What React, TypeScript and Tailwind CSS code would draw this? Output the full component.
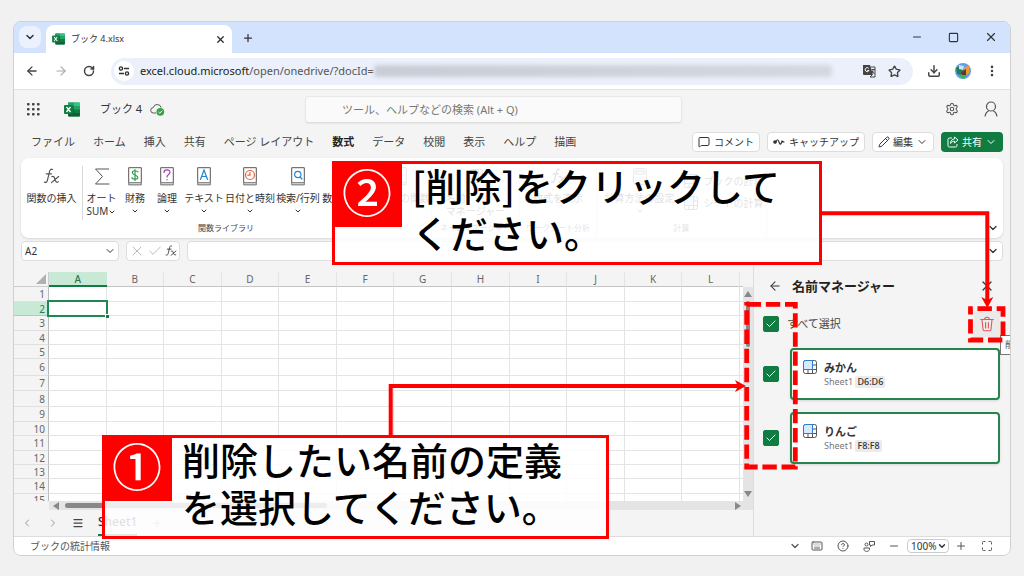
import type { ReactNode } from "react";
import {
  ArrowLeft,
  ArrowRight,
  Check,
  ChevronDown,
  ChevronLeft,
  ChevronRight,
  CircleHelp,
  Download,
  EllipsisVertical,
  Keyboard,
  Maximize,
  Menu,
  MessageSquare,
  Minus,
  Pencil,
  Plus,
  RotateCw,
  Settings,
  Square,
  Star,
  X,
} from "lucide-react";

const FONT = "font-['Noto_Sans','Noto_Sans_CJK_JP',sans-serif]";

function ExcelLogo({ className }: { className: string }) {
  return (
    <svg viewBox="0 0 32 30" className={className} aria-hidden="true">
      <rect x="8" y="1" width="24" height="28" rx="2" fill="#21a366" />
      <rect x="8" y="1" width="12" height="7" fill="#21a366" />
      <path d="M20 1h10a2 2 0 0 1 2 2v5H20z" fill="#33c481" />
      <rect x="8" y="8" width="12" height="7" fill="#107c41" />
      <rect x="20" y="8" width="12" height="7" fill="#21a366" />
      <rect x="8" y="15" width="12" height="7" fill="#185c37" />
      <rect x="20" y="15" width="12" height="7" fill="#107c41" />
      <path d="M8 22h24v5a2 2 0 0 1-2 2H10a2 2 0 0 1-2-2z" fill="#185c37" />
      <rect x="0" y="6" width="18" height="18" rx="2" fill="#107c41" />
      <path d="M5 10l8 10M13 10l-8 10" stroke="#fff" strokeWidth="2.600" fill="none" />
    </svg>
  );
}

function FxIcon({ className }: { className: string }) {
  return (
    <svg viewBox="0 0 16 16" className={className} fill="none" stroke="currentColor" strokeWidth="1.1" strokeLinecap="round" aria-hidden="true">
      <path d="M9 1.4C7.6.6 6.6 1.500 6.200 3.200L4.200 11.500C3.800 13.300 2.800 14 1.300 13.300M3 5.500h5" />
      <path d="M8.300 8.200c1.700-.9 2.300.2 2.900 2.300.6 2.200 1.400 3.600 3.200 2.500M14.700 8L8 13.800" />
    </svg>
  );
}

function BookIcon({ color, children }: { color: string; children: ReactNode }) {
  return (
    <svg viewBox="0 0 14 19" className="h-[19px] w-3.5" fill="none" aria-hidden="true">
      <path d="M.7.700h12.600v15H.700z" fill="#fff" stroke="#555" />
      <path d="M.7 15.700v2.200h12.600v-2.200" fill="#ccc" stroke="#777" />
      <g stroke={color} strokeWidth="1.200" strokeLinecap="round">
        {children}
      </g>
    </svg>
  );
}

function RangeIcon() {
  return (
    <svg viewBox="0 0 14 14" className="size-3.5 shrink-0" fill="none" aria-hidden="true">
      <rect x=".5" y=".5" width="13" height="13" rx="2" fill="#fff" stroke="#555" />
      <path d="M9.500.500v13M.5 9.500h13M9.500 5h4M5 9.500v4" stroke="#555" />
      <path d="M.5 9.500v-7a2 2 0 0 1 2-2h7v9z" fill="#d6eafb" stroke="#2b7cd3" />
    </svg>
  );
}

function Tabs() {
  return (
    <header className="flex h-[31px] items-end bg-[#d3e3fd] pr-3">
      <button aria-label="タブを検索" className="mb-[5px] ml-[5px] grid size-[22px] place-items-center rounded-lg bg-[#ebf2fe]">
        <ChevronDown className="size-3" strokeWidth={3} />
      </button>
      <div className="ml-[5px] flex h-7 w-[186px] items-center rounded-t-lg bg-white px-1.5">
        <ExcelLogo className="h-3 w-[13px]" />
        <span className="ml-1.5 text-[9px] text-[#333]">ブック 4.xlsx</span>
        <button aria-label="タブを閉じる" className="ml-auto">
          <X className="size-[11px]" strokeWidth={3} />
        </button>
      </div>
      <button aria-label="新しいタブ" className="mb-[9px] ml-2.5">
        <Plus className="size-3" strokeWidth={2.500} />
      </button>
      <div className="mb-[9px] ml-auto flex items-center gap-[25px]">
        <button aria-label="最小化"><Minus className="size-3" /></button>
        <button aria-label="最大化"><Square className="size-[11px]" strokeWidth={2.500} /></button>
        <button aria-label="閉じる"><X className="size-3.5" /></button>
      </div>
    </header>
  );
}

function AddressBar() {
  return (
    <div className="flex h-[37px] items-center border-b border-[#e2e2e2] bg-white pr-[11px] text-[#444]">
      <div className="flex w-[97px] items-center gap-[15px] pl-[11px]">
        <button aria-label="戻る"><ArrowLeft className="size-3.5" strokeWidth={2.200} /></button>
        <button aria-label="進む" className="text-[#aaa]"><ArrowRight className="size-3.5" /></button>
        <button aria-label="再読み込み"><RotateCw className="size-3" strokeWidth={3} /></button>
      </div>
      <div className="flex h-[27px] min-w-0 flex-1 items-center rounded-full bg-[#ebf0fa] pr-3 pl-[3px]">
        <span className="grid size-5 shrink-0 place-items-center rounded-full bg-white">
          <svg viewBox="0 0 12 10" className="h-2.5 w-3" fill="none" stroke="#333" strokeWidth="1.400" aria-hidden="true">
            <circle cx="3" cy="2.500" r="1.600" />
            <path d="M6 2.500h5M1 7.500h5" />
            <circle cx="9" cy="7.500" r="1.600" />
          </svg>
        </span>
        <span className="ml-1.5 shrink-0 text-[11px] text-[#555]">
          <span className="text-[#222]">excel.cloud.microsoft</span>/open/onedrive/?docId=
        </span>
        <span className="h-3 min-w-0 flex-1 rounded bg-linear-to-r from-[#c9cdd6] via-[#ced2da] to-[#d4d8e1] blur-[2px]" />
        <button aria-label="このページを翻訳" className="ml-[30px] shrink-0">
          <svg viewBox="0 0 14 14" className="size-3.5" fill="none" aria-hidden="true">
            <path d="M1 1h7l3 10H2a1 1 0 0 1-1-1z" fill="#444" />
            <path d="M6.800 4.500A2 2 0 1 0 7 6.500H5.300" stroke="#fff" />
            <path d="M8.500 3H13v10H8l2-2M9.500 5.500H13M11 5v1.500c0 1.500-.6 2.500-1.500 3M10 7l2.500 3" stroke="#444" />
          </svg>
        </button>
        <button aria-label="ブックマーク" className="ml-3 shrink-0"><Star className="size-[13px]" strokeWidth={2.500} /></button>
      </div>
      <button aria-label="ダウンロード" className="ml-3.5"><Download className="size-3.5" strokeWidth={2.500} /></button>
      <button aria-label="プロフィール" className="ml-3.5">
        <svg viewBox="0 0 16 16" className="size-4" aria-hidden="true">
          <circle cx="8" cy="8" r="8" fill="#5a9ff0" />
          <path d="M1 5l5-3 3 6-3 4-4-1z" fill="#2c7a55" />
          <path d="M4 2l5 1-1 4-4-1z" fill="#cfe4fb" />
          <path d="M9 4l5-1v7l-3 2z" fill="#f09a2a" />
          <path d="M6 10l5-4v6l-3 1z" fill="#5d3a25" />
          <path d="M4 12l7 0-1 3.500H7z" fill="#39b54a" />
        </svg>
      </button>
      <button aria-label="メニュー" className="ml-3.5"><EllipsisVertical className="size-3.5" strokeWidth={2.500} /></button>
    </div>
  );
}

function AppHeader() {
  return (
    <div className="grid h-10 grid-cols-[291px_1fr_328px] items-center pb-0.5">
      <div className="flex items-center pl-[13px]">
        <button aria-label="アプリ起動ツール">
          <svg viewBox="0 0 13 13" className="size-[13px]" fill="#444" aria-hidden="true">
            {[0, 5, 10].map((y) => [0, 5, 10].map((x) => <rect key={`${x}-${y}`} x={x} y={y} width="2.600" height="2.600" rx=".8" />))}
          </svg>
        </button>
        <ExcelLogo className="ml-6 h-[15px] w-4" />
        <span className="ml-5 text-[11px] text-[#333]">ブック 4</span>
        <svg viewBox="0 0 15 13" className="ml-2 h-[13px] w-[15px]" fill="none" aria-hidden="true">
          <path d="M6 10H3.500a2.700 2.700 0 0 1-.2-5.400 4 4 0 0 1 7.800 0" stroke="#555" />
          <circle cx="10.300" cy="8.800" r="3.900" fill="#37a546" />
          <path d="M8.500 9l1.300 1.200 2.300-2.500" stroke="#fff" />
        </svg>
      </div>
      <input
        aria-label="検索"
        placeholder="ツール、ヘルプなどの検索 (Alt + Q)"
        className="h-[27px] w-full rounded border border-[#e8e8e8] border-b-[#ddd] bg-[#fafafa] pl-9 text-[11px] shadow-xs outline-none placeholder:text-[#777]"
      />
      <div className="flex items-center justify-end gap-[25px] pr-3 text-[#555]">
        <button aria-label="設定">
          <Settings className="size-3.5" strokeWidth={1.800} />
        </button>
        <button aria-label="アカウント">
          <svg viewBox="0 0 14 16" className="h-4 w-3.5" fill="none" stroke="currentColor" strokeWidth="1.200" aria-hidden="true">
            <circle cx="7" cy="5.500" r="4.500" />
            <path d="M1 15.500C1.500 12 3 10.500 5 9.700M13 15.500c-.5-3.500-2-5-4-5.800" />
          </svg>
        </button>
      </div>
    </div>
  );
}

const RIBBON_TABS = ["ファイル", "ホーム", "挿入", "共有", "ページ レイアウト", "数式", "データ", "校閲", "表示", "ヘルプ", "描画"];
const ACTION = "flex h-5 items-center rounded border border-[#ddd] bg-white px-[5px] text-[10px] text-[#333]";

function RibbonTabs() {
  return (
    <div className="flex h-7 items-center justify-between pr-[7px] pb-1 pl-[17px] whitespace-nowrap">
      <nav className="flex gap-[18px] text-[11px] text-[#444]">
        {RIBBON_TABS.map((t) => (
          <button key={t} className={t === "数式" ? "font-bold text-[#222]" : ""}>{t}</button>
        ))}
      </nav>
      <div className="flex gap-[7px]">
        <button className={`${ACTION} gap-1`}><MessageSquare className="size-3" />コメント</button>
        <button className={`${ACTION} gap-1`}>
          <svg viewBox="0 0 12 8" className="h-2 w-3" fill="none" stroke="#333" strokeWidth="1.200" aria-hidden="true">
            <circle cx="2" cy="4" r="1.200" fill="#333" />
            <path d="M3 4c1-3 2-3 3 0s2 3 3-1l2 1M9 4h2.500" />
          </svg>
          キャッチアップ
        </button>
        <button className={`${ACTION} gap-[3px]`}><Pencil className="size-3" />編集<ChevronDown className="size-3" /></button>
        <button className="flex h-5 items-center gap-[3px] rounded bg-[#107c41] px-1.5 text-[10px] text-white">
          <svg viewBox="0 0 12 12" className="size-3" fill="none" stroke="currentColor" aria-hidden="true">
            <path d="M5 2H2.500A1.500 1.500 0 0 0 1 3.500v6A1.500 1.500 0 0 0 2.500 11h6A1.500 1.500 0 0 0 10 9.500V8" />
            <path d="M7.500 1l3.500 3-3.500 3V5.200C5.500 5.200 4.500 6 3.500 7.500 3.700 4.700 5.200 3 7.500 2.800z" />
          </svg>
          共有<ChevronDown className="size-3" />
        </button>
      </div>
    </div>
  );
}

function Tool({ label, icon, width, arrow = true }: { label: string; icon: ReactNode; width: string; arrow?: boolean }) {
  return (
    <button className={`flex shrink-0 flex-col items-center text-[10px] leading-[13px] whitespace-nowrap text-[#333] ${width}`}>
      <span className="mb-1.5 grid h-5 place-items-center">{icon}</span>
      {label}
      {arrow && <ChevronDown className="mt-0.5 size-2" strokeWidth={3} />}
    </button>
  );
}

function Ribbon() {
  return (
    <section className="mx-[7px] flex h-20 rounded-lg bg-white pt-2 pr-1 shadow">
      <div className="flex w-[411px] shrink-0 flex-col border-r border-[#e0e0e0]">
        <div className="flex h-14 overflow-hidden">
          <Tool label="関数の挿入" width="w-[61px]" arrow={false} icon={<FxIcon className="size-[17px] text-[#555]" />} />
          <span className="h-[54px] w-px shrink-0 bg-[#d8d8d8]" />
          <button className="flex w-[37px] shrink-0 flex-col items-center text-[10px] leading-[13px] whitespace-nowrap text-[#333]">
            <span className="mb-1.5 grid h-5 place-items-center">
              <svg viewBox="0 0 16 17" className="h-[17px] w-4" fill="none" stroke="#555" aria-hidden="true">
                <path d="M15 1H1.500l7 7.500-7 7.500H15.500" />
              </svg>
            </span>
            オート
            <span className="flex items-center">SUM<ChevronDown className="size-2" strokeWidth={3} /></span>
          </button>
          <Tool label="財務" width="w-[30px]" icon={<BookIcon color="#2e9e49"><path d="M10 5C9.500 3.500 4.500 3 4.300 5.500S10 8 9.800 10.500 4 12.500 4 10.500M7 2.500v11" /></BookIcon>} />
          <Tool label="論理" width="w-[34px]" icon={<BookIcon color="#a33db5"><path d="M4 5.500C4 2 10 2 10 5.300 10 7.500 7 7.500 7 10M7 12.600v.2" /></BookIcon>} />
          <Tool label="テキスト" width="w-10" icon={<BookIcon color="#1e88d2"><path d="M3.500 12.500L7 3l3.500 9.500M4.700 9.500h4.600" /></BookIcon>} />
          <Tool label="日付と時刻" width="w-[52px]" icon={<BookIcon color="#e8643c"><circle cx="7" cy="8" r="4.500" /><path d="M7 5.500V8.200H4.800" /></BookIcon>} />
          <Tool label="検索/行列" width="w-11" icon={<BookIcon color="#1e88d2"><circle cx="6.800" cy="7.500" r="3.200" /><path d="M9 10l2 2" /></BookIcon>} />
          <Tool label="数学/三角" width="w-12" icon={<BookIcon color="#1e88d2"><path d="M3.500 8h7" /></BookIcon>} />
          <Tool label="その他の関数" width="w-16" icon={<BookIcon color="#555"><path d="M4 8h.1M7 8h.1M10 8h.1" /></BookIcon>} />
        </div>
        <span className="text-center text-[8px] leading-3 text-[#444]">関数ライブラリ</span>
      </div>
      <div className="flex w-[88px] shrink-0 flex-col items-center border-r border-[#e0e0e0]">
        <div className="flex h-14 flex-col items-center text-[10px] leading-[13px] text-[#333]">
          <span className="mb-1.5 grid h-5 place-items-center"><RangeIcon /></span>
          名前<br />マネージャー
        </div>
        <span className="text-[8px] leading-3 whitespace-nowrap text-[#444]">ネームマネージャー</span>
      </div>
      <div className="flex w-[77px] shrink-0 flex-col items-center border-r border-[#e0e0e0]">
        <div className="h-14"><Tool label="数式を表示" width="w-16" arrow={false} icon={<FxIcon className="size-[17px]" />} /></div>
        <span className="text-[8px] leading-3 whitespace-nowrap text-[#444]">ワークシート分析</span>
      </div>
      <div className="flex w-[170px] shrink-0 flex-col items-center border-r border-[#e0e0e0]">
        <div className="flex h-14 gap-1">
          <Tool
            label="計算方法の設定"
            width="w-20"
            icon={
              <svg viewBox="0 0 14 17" className="h-[17px] w-3.5" fill="none" stroke="#555" aria-hidden="true">
                <rect x=".7" y=".7" width="12.600" height="15.600" rx="2" />
                <path d="M3 3h8v3H3zM3.500 9h1M6.500 9h1M9.500 9h1M3.500 12.500h1M6.500 12.500h1M9.500 12.500h1" />
              </svg>
            }
          />
          <div className="flex flex-col gap-2 pt-2 text-[10px] leading-[13px] whitespace-nowrap text-[#333]">
            <button className="flex items-center gap-1.5"><RangeIcon />ブックの計算</button>
            <button className="flex items-center gap-1.5"><RangeIcon />シートの計算</button>
          </div>
        </div>
        <span className="text-[8px] leading-3 text-[#444]">計算</span>
      </div>
      <button aria-label="リボンの表示オプション" className="mt-auto mb-1 ml-auto"><ChevronDown className="size-3" strokeWidth={2.500} /></button>
    </section>
  );
}

function FormulaBar() {
  const box = "flex h-5 items-center rounded border border-[#ddd] bg-white";
  return (
    <div className="mx-[7px] mt-[3px] flex gap-[7px]">
      <div className={`${box} w-[98px] pr-0.5 pl-[3px]`}>
        <input aria-label="名前ボックス" defaultValue="A2" className="w-full min-w-0 text-[10px] text-[#333] outline-none" />
        <ChevronDown className="size-3 shrink-0" />
      </div>
      <div className={`${box} w-[54px] justify-between px-0.5`}>
        <button aria-label="キャンセル" className="text-[#bbb]"><X className="size-4" strokeWidth={1.500} /></button>
        <button aria-label="入力" className="text-[#bbb]"><Check className="size-4" strokeWidth={1.500} /></button>
        <button aria-label="関数の挿入" className="text-[#333]"><FxIcon className="size-3" /></button>
      </div>
      <div className={`${box} flex-1 pr-[3px]`}>
        <input aria-label="数式バー" className="w-full min-w-0 px-1 text-[10px] outline-none" />
        <ChevronDown className="size-3 shrink-0" strokeWidth={2.500} />
      </div>
    </div>
  );
}

const COLUMNS = ["A", "B", "C", "D", "E", "F", "G", "H", "I", "J", "K", "L"];
const ROW_HEIGHTS = [15, 14, 15, 14, 14, 17, 15, 16, 15, 14, 15, 14, 14, 15];

function Grid() {
  return (
    <div className="flex min-w-0 flex-1 flex-col pt-1.5">
      <div className="flex">
        <div className="h-[229px] min-w-0 flex-1 overflow-hidden">
          <table className="w-full table-fixed border-separate border-spacing-0 text-[#666]">
            <colgroup>
              <col className="w-[35px]" />
              {COLUMNS.map((c) => <col key={c} />)}
              <col className="w-[3px]" />
            </colgroup>
            <thead>
              <tr className="h-[15px] text-[10px] leading-3">
                <th aria-label="すべて選択" className="border-r border-b border-[#ccc] p-0">
                  <svg viewBox="0 0 10 10" className="mr-0.5 ml-auto size-2.5" aria-hidden="true"><path d="M10 0v10H0z" fill="#b0b0b0" /></svg>
                </th>
                {COLUMNS.map((c) => (
                  <th
                    key={c}
                    className={
                      c === "A"
                        ? "border-b-2 border-[#107c41] bg-[#c8e9d6] p-0 font-medium text-[#2b7a4f]"
                        : "border-r border-b border-r-[#e4e4e4] border-b-[#c4c4c4] p-0 font-normal"
                    }
                  >
                    {c}
                  </th>
                ))}
                <th className="border-b border-[#c4c4c4] p-0" />
              </tr>
            </thead>
            <tbody>
              {ROW_HEIGHTS.map((h, i) => (
                <tr key={i} style={{ height: h }} className="text-[10px] leading-3">
                  <th className={`border-r border-b border-r-[#bbb] p-0 pr-[3px] text-right font-normal ${i === 1 ? "border-b-[#9fd5b7] bg-[#c8e9d6] text-[#2b7a4f]" : "border-b-[#e0e0e0]"}`}>
                    {i + 1}
                  </th>
                  {COLUMNS.map((c) => (
                    <td key={c} className={`border-r border-b border-[#e4e4e4] bg-white p-0 ${c === "A" && i === 1 ? "relative" : ""}`}>
                      {c === "A" && i === 1 && (
                        <span className="absolute -inset-x-0.5 -top-0.5 -bottom-0.5 z-10 border-2 border-[#1f8750]">
                          <span className="absolute -right-[3px] -bottom-[3px] size-1 border-t border-l border-white bg-[#107c41]" />
                        </span>
                      )}
                    </td>
                  ))}
                  <td className="border-b border-[#e4e4e4] bg-white p-0" />
                </tr>
              ))}
              <tr className="text-[10px] leading-3">
                <th className="border-r border-[#bbb] p-0 pr-[3px] text-right font-normal">15</th>
                {COLUMNS.map((c) => <td key={c} className="border-r border-[#e4e4e4] bg-white p-0" />)}
                <td className="bg-white p-0" />
              </tr>
            </tbody>
          </table>
        </div>
        <div className="mt-[15px] flex w-2.5 flex-col items-center bg-[#e4e4e4] py-1">
          <svg viewBox="0 0 8 6" className="h-1.5 w-2" aria-hidden="true"><path d="M4 0l4 6H0z" fill="#888" /></svg>
          <span className="mt-1 h-[46px] w-1 rounded bg-[#888]" />
          <svg viewBox="0 0 8 6" className="mt-auto h-1.5 w-2" aria-hidden="true"><path d="M4 6l4-6H0z" fill="#888" /></svg>
        </div>
      </div>
      <div className="ml-[35px] flex h-[9px] items-center bg-[#e4e4e4] pr-3 pl-1">
        <svg viewBox="0 0 6 8" className="h-2 w-1.5" aria-hidden="true"><path d="M0 4l6-4v8z" fill="#888" /></svg>
        <span className="ml-1.5 h-[5px] w-[262px] rounded bg-[#888]" />
        <svg viewBox="0 0 6 8" className="ml-auto h-2 w-1.5" aria-hidden="true"><path d="M6 4L0 0v8z" fill="#888" /></svg>
      </div>
      <div className="flex h-[26px] items-center pl-[7px] text-[#999]">
        <ChevronLeft className="size-3" />
        <ChevronRight className="ml-3.5 size-3" />
        <Menu className="ml-[13px] size-3 text-[#444]" strokeWidth={2.500} />
        <button className="ml-3.5 h-full border-b-2 border-[#107c41] text-[12px] font-medium text-[#333]">Sheet1</button>
        <button aria-label="新しいシート" className="ml-3.5"><Plus className="size-3" /></button>
      </div>
    </div>
  );
}

function Tick({ id, label }: { id: string; label: string }) {
  return (
    <span className="grid shrink-0">
      <input id={id} type="checkbox" defaultChecked aria-label={label} className="peer col-start-1 row-start-1 size-4 appearance-none rounded-xs border border-[#107c41] checked:bg-[#107c41]" />
      <Check className="pointer-events-none invisible col-start-1 row-start-1 m-0.5 size-3 text-white peer-checked:visible" />
    </span>
  );
}

const NAMES = [
  { name: "みかん", sheet: "Sheet1", range: "D6:D6" },
  { name: "りんご", sheet: "Sheet1", range: "F8:F8" },
];

function NamePanel() {
  return (
    <aside className="relative w-[257px] shrink-0 border-l border-[#ddd] pr-2.5 pl-[9px]">
      <div className="flex items-center pt-2.5 pr-[5px] pl-[5px]">
        <button aria-label="戻る"><ArrowLeft className="size-3.5" strokeWidth={1.800} /></button>
        <h2 className="ml-2.5 text-[13px] leading-5 font-bold text-[#222]">名前マネージャー</h2>
        <button aria-label="閉じる" className="ml-auto"><X className="size-4" strokeWidth={1.800} /></button>
      </div>
      <div className="mt-[15px] flex h-[26px] items-center">
        <Tick id="all" label="すべて選択" />
        <label htmlFor="all" className="ml-2 text-[11px] text-[#444]">すべて選択</label>
        <button aria-label="削除" className="ml-auto grid size-[26px] place-items-center bg-[#eaeaea] text-[#e5575b]">
          <svg viewBox="0 0 14 16" className="h-4 w-3.5" fill="none" stroke="currentColor" strokeWidth="1.100" strokeLinecap="round" aria-hidden="true">
            <path d="M.7 3.500h12.600M4.700 3.500c0-3 4.600-3 4.600 0M2 3.500l1 10c.1.800.6 1.300 1.300 1.300h5.400c.7 0 1.200-.5 1.300-1.300l1-10M5.600 6.500v5.500M8.400 6.500v5.500" />
          </svg>
        </button>
      </div>
      <ul className="mt-[11px] flex flex-col gap-3">
        {NAMES.map((n) => (
          <li key={n.name} className="flex items-center gap-[11px]">
            <Tick id={n.range} label={n.name} />
            <div className="flex h-[52px] flex-1 gap-[7px] rounded border-2 border-[#26854f] bg-white pt-2.5 pl-[11px] shadow-sm">
              <RangeIcon />
              <div className="text-[9px] leading-[14px] text-[#777]">
                <p className="text-[11px] leading-[15px] font-bold text-[#333]">{n.name}</p>
                {n.sheet} <span className="inline-block rounded-xs bg-[#ebebeb] px-0.5 leading-3 font-medium text-[#333]">{n.range}</span>
              </div>
            </div>
          </li>
        ))}
      </ul>
      <div className="absolute top-[69px] -right-2 h-5 w-[18px] border border-[#777] bg-white pl-1 text-[9px] leading-[18px] text-[#555]">削</div>
    </aside>
  );
}

function StatusBar() {
  return (
    <footer className="flex h-[19px] items-center border-t border-[#ddd] bg-white pr-[17px] pl-4 text-[10px] text-[#555]">
      <span>ブックの統計情報</span>
      <div className="ml-auto flex items-center">
        <ChevronDown className="size-3" strokeWidth={2.500} />
        <Keyboard className="ml-2.5 size-3" />
        <CircleHelp className="ml-3.5 size-3" />
        <svg viewBox="0 0 12 12" className="ml-3.5 size-3" fill="none" stroke="currentColor" aria-hidden="true">
          <circle cx="3.500" cy="4.500" r="1.500" />
          <path d="M1 8h5.500v1.500C6 12 1 12 1 9.500zM6.500 1.500h5v3.500H9L7.500 6.500V5h-1z" />
        </svg>
        <button aria-label="縮小" className="ml-[13px]"><Minus className="size-3" /></button>
        <span className="mr-1.5 ml-[7px] grid items-center">
          <select aria-label="ズーム" className="col-start-1 row-start-1 h-3.5 w-[42px] appearance-none rounded border border-[#ccc] bg-white pl-[3px] text-[10px] leading-3 text-[#333]">
            <option>100%</option>
          </select>
          <ChevronDown className="pointer-events-none col-start-1 row-start-1 mr-0.5 ml-auto size-2.5 text-[#333]" strokeWidth={3.500} />
        </span>
        <button aria-label="拡大"><Plus className="size-3" /></button>
        <button aria-label="全画面" className="ml-3.5"><Maximize className="size-3" /></button>
      </div>
    </footer>
  );
}

function Callout({ mark, lines, place }: { mark: string; lines: string[]; place: string }) {
  return (
    <div className={`absolute flex h-[104px] border-3 border-[#f00] bg-white/85 font-['Noto_Sans_CJK_JP',sans-serif] ${place}`}>
      <span className="-mt-[3px] -ml-[3px] grid h-[66px] w-[70px] shrink-0 place-items-center bg-[#f00] pb-2 text-[50px] leading-none font-medium text-white">{mark}</span>
      <p className="-mt-[3px] pl-2.5 text-[38px] leading-[47px] font-medium whitespace-nowrap text-black">
        {lines.map((l) => <span key={l} className="block">{l}</span>)}
      </p>
    </div>
  );
}

export default function App() {
  return (
    <div className={`relative min-h-screen bg-[#f1f1f1] px-[13px] py-[21px] ${FONT}`}>
      <main className="overflow-hidden rounded-lg border border-[#d0d0d0] bg-[#f4f4f4] text-[#333]">
        <Tabs />
        <AddressBar />
        <AppHeader />
        <RibbonTabs />
        <Ribbon />
        <FormulaBar />
        <div className="mt-[5px] flex">
          <Grid />
          <NamePanel />
        </div>
        <StatusBar />
      </main>

      <svg viewBox="0 0 1024 576" className="pointer-events-none absolute top-0 left-0 h-[576px] w-[1024px]" fill="none" stroke="#f00" aria-hidden="true">
        <path d="M390.700 437V386H740M820 213.300H987.300V302" strokeWidth="4" />
        <path d="M746 386l-11-6 3 6-3 6zM987.300 308l-6-11 6 3 6-3z" fill="#f00" stroke="none" />
        <rect x="746.700" y="304.300" width="48.600" height="162.700" strokeWidth="4.800" strokeDasharray="14.400 4.750" />
        <rect x="970.500" y="308.700" width="32.500" height="31.300" strokeWidth="4.800" strokeDasharray="14.400 4.750" strokeDashoffset="-7" />
      </svg>
      <Callout mark="②" lines={["[削除]をクリックして", "ください。"]} place="top-[161px] left-[332px] w-[490px]" />
      <Callout mark="①" lines={["削除したい名前の定義", "を選択してください。"]} place="top-[435px] left-[102px] w-[507px]" />
    </div>
  );
}
